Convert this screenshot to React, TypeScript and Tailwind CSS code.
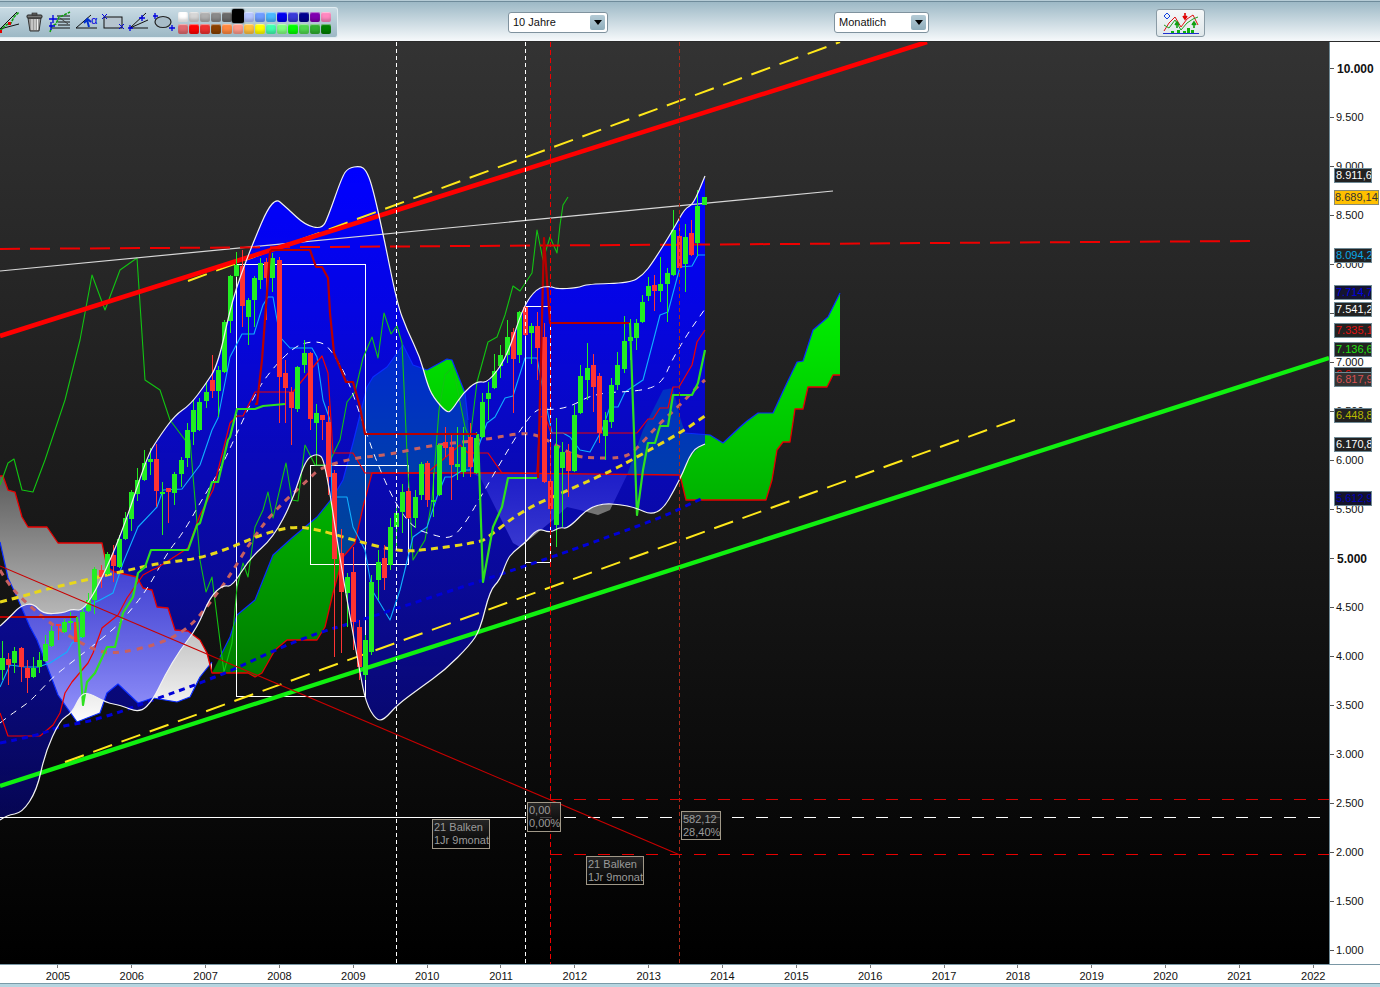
import React from "react";

type P = [number, number];
const s = (a: P[]) => a.map((p) => p.join(",")).join(" ");
const curve = (a: P[], move = true) => {
  let d = (move ? "M" : "L") + a[0].join(" ");
  for (let i = 1; i < a.length - 1; i++) {
    const mx = (a[i][0] + a[i + 1][0]) / 2;
    const my = (a[i][1] + a[i + 1][1]) / 2;
    d += ` Q${a[i][0]} ${a[i][1]} ${mx} ${my}`;
  }
  d += ` L${a[a.length - 1].join(" ")}`;
  return d;
};

const upper: P[] = [[0,626],[10,617],[20,606],[33,603],[43,614],[63,613],[72,609],[83,611],[100,583],[123,530],[147,457],[157,440],[175,415],[190,405],[205,385],[218,365],[232,300],[250,250],[273,196],[287,208],[305,225],[322,229],[328,217],[342,177],[348,168],[360,166],[366,170],[372,185],[383,233],[397,303],[407,330],[420,357],[427,383],[433,397],[447,413],[452,410],[463,393],[477,381],[488,383],[507,357],[523,307],[537,288],[550,286],[557,289],[577,288],[588,284],[630,283],[643,275],[653,262],[673,230],[685,208],[693,205],[705,176]];
const lower: P[] = [[0,820],[7,815],[22,813],[37,790],[45,753],[60,720],[72,713],[80,696],[87,692],[107,703],[120,705],[140,713],[153,700],[165,675],[180,650],[197,628],[210,597],[223,585],[232,587],[250,558],[273,538],[293,500],[305,460],[317,453],[325,460],[340,560],[360,673],[366,703],[376,720],[384,720],[397,705],[420,688],[445,670],[470,645],[480,630],[490,590],[500,580],[507,560],[513,552],[525,543],[538,528],[550,533],[560,527],[568,529],[593,503],[630,505],[658,518],[680,480],[692,450],[705,444]];
const envelope = curve(upper) + " " + curve([...lower].reverse(), false) + " Z";

const spanBLeft: P[] = [[0,476],[3,476],[8,490],[15,492],[22,517],[28,527],[47,527],[58,543],[102,543],[107,567],[115,572],[137,577],[143,588],[152,590],[157,607],[168,608],[175,630],[188,631],[200,640],[207,653],[212,673]];
const spanALeft: P[] = [[0,542],[8,578],[17,597],[30,627],[37,640],[58,695],[77,722],[100,713],[107,693],[118,684],[138,703],[153,698],[177,702],[190,697],[200,677],[212,662]];
const cloudB: P[] = [[212,673],[220,657],[230,637],[237,615],[255,600],[273,555],[293,537],[317,517],[333,497],[343,480],[353,443],[367,387],[373,377],[387,367],[403,345],[413,365],[427,370],[447,359],[452,360],[465,393],[468,420],[471,473],[372,473],[363,507],[355,543],[343,557],[333,593],[325,627],[317,640],[287,640],[275,650],[262,673],[255,677],[248,673]];
const cloudC: P[] = [[471,473],[480,477],[513,543],[520,547],[553,520],[567,507],[580,510],[598,515],[610,510],[627,475],[502,473]];
const cloudD: P[] = [[627,475],[643,430],[663,390],[673,388],[680,417],[685,433],[710,435],[723,443],[740,427],[747,421],[758,413],[773,413],[785,387],[797,362],[803,361],[813,330],[828,317],[840,293],[840,375],[833,375],[827,387],[808,387],[803,409],[795,409],[790,442],[783,442],[777,450],[772,480],[766,500],[686,500],[680,475]];
const spanB: P[] = [...spanBLeft,[248,673],[255,677],[262,673],[275,650],[287,640],[317,640],[325,627],[333,593],[343,557],[355,543],[363,507],[372,473],[502,473],[680,475],[686,500],[766,500],[772,480],[777,450],[783,442],[790,442],[795,409],[803,409],[808,387],[827,387],[833,375],[840,375]];
const spanAUp: P[] = cloudB.slice(1,21);
const spanARight: P[] = cloudD.slice(5,18);

const cyan: P[] = [[0,687],[10,665],[25,667],[38,667],[50,663],[67,652],[72,643],[82,637],[83,608],[100,600],[113,593],[123,563],[138,527],[157,507],[163,490],[182,489],[200,465],[212,430],[218,418],[230,357],[242,334],[254,334],[263,305],[268,297],[273,297],[280,337],[290,348],[312,348],[317,357],[323,400],[330,420],[332,497],[347,497],[353,527],[365,550],[372,590],[390,620],[400,590],[413,537],[427,527],[437,497],[445,477],[452,477],[463,470],[470,470],[487,423],[495,417],[505,398],[513,396],[525,358],[537,358],[545,400],[552,433],[563,433],[570,437],[580,450],[590,452],[602,430],[610,407],[618,407],[625,392],[643,380],[653,342],[660,315],[668,312],[680,267],[692,266],[698,255],[705,255]];
const chikou: P[] = [[0,485],[8,463],[14,459],[22,490],[33,492],[45,460],[65,400],[80,340],[92,275],[105,310],[120,270],[137,258],[145,380],[160,390],[170,420],[185,440],[190,440],[197,523],[200,560],[206,592],[212,577],[222,657],[224,672],[232,643],[237,587],[243,563],[248,577],[255,527],[263,510],[268,492],[273,518],[286,463],[292,500],[298,501],[305,445],[315,465],[328,465],[340,440],[347,402],[355,392],[363,358],[372,337],[378,358],[384,313],[391,334],[397,326],[402,343],[407,453],[413,560],[425,540],[432,500],[439,410],[445,375],[453,367],[465,427],[470,440],[477,382],[488,342],[497,337],[505,315],[513,286],[520,291],[532,273],[537,230],[543,260],[550,237],[557,253],[560,225],[563,205],[568,197]];
const thickRed: P[][] = [[[0,617],[77,617]],[[255,404],[257,404],[262,360],[270,252],[272,250],[310,250],[316,267],[322,267],[328,278],[330,313],[334,353],[340,367],[346,382],[353,382],[360,407],[365,434],[477,434]],[[538,478],[544,238],[550,323],[630,323]]];
const thickGreen: P[][] = [[[77,617],[83,705],[87,682],[95,673],[107,647],[115,647],[123,613],[133,597],[138,573],[145,567],[151,550],[188,550],[197,525],[200,523],[212,482],[218,482],[228,440],[230,437],[237,409],[255,409],[263,406],[285,404]],[[478,434],[483,582],[493,527],[502,507],[508,478],[537,478]],[[630,323],[637,515],[643,470],[648,443],[655,443],[660,426],[668,426],[673,395],[692,395],[698,383],[705,350]]];
const thinRed: P[] = [[0,713],[8,736],[40,736],[53,725],[60,713],[65,693],[72,682],[88,663],[93,653],[102,628],[118,615],[127,598],[143,575],[152,570],[157,568],[188,548],[200,515],[213,490],[230,423],[237,416],[243,416],[255,392],[293,392],[322,356],[328,373],[333,453],[353,453],[365,473],[427,473],[440,462],[460,445],[468,453],[488,453],[502,473],[537,473],[540,417],[545,416],[551,433],[637,433],[648,419],[653,419],[660,408],[668,408],[673,387],[679,387],[692,365],[697,342],[705,330]];
const midBand: P[] = [[0,723],[10,715],[28,703],[38,693],[53,677],[72,662],[90,648],[115,628],[125,617],[147,590],[167,553],[183,533],[200,503],[220,470],[237,433],[257,390],[273,368],[293,348],[307,342],[323,342],[333,353],[347,377],[363,423],[377,463],[395,503],[413,528],[433,535],[450,539],[463,527],[483,493],[502,460],[522,427],[537,408],[550,410],[570,407],[595,393],[643,391],[662,383],[672,360],[688,333],[705,309]];
const salmon: P[] = [[0,570],[7,582],[20,597],[40,615],[57,628],[87,647],[113,655],[163,643],[190,627],[210,603],[227,580],[253,538],[275,510],[310,478],[320,468],[353,458],[387,455],[433,445],[483,440],[520,433],[538,435],[552,443],[577,457],[595,458],[620,458],[633,453],[658,425],[680,405],[697,387],[705,380]];
const yellow: P[] = [[0,602],[20,597],[43,590],[77,582],[120,572],[160,563],[197,559],[230,548],[260,535],[293,526],[320,530],[353,540],[400,552],[433,549],[480,542],[487,538],[523,510],[573,488],[613,470],[637,457],[680,433],[705,416]];
const blueDash: P[] = [[0,743],[40,735],[57,727],[87,722],[120,712],[147,702],[187,688],[233,670],[277,649],[320,632],[353,623],[550,558],[613,535],[660,518],[703,498]];

// x, body top, body bottom, wick top, wick bottom, colour
const candles: [number, number, number, number, number, "g" | "r"][] = [
[2,658,670,641,680,"g"],[8,659,665,653,685,"r"],[14,651,663,647,673,"g"],[21,648,667,647,682,"r"],[27,668,678,660,693,"r"],[33,668,677,657,678,"g"],[39,660,667,652,673,"g"],[45,644,661,635,662,"g"],[51,631,646,626,647,"g"],[58,624,625,624,640,"r"],[64,622,632,619,633,"g"],[70,621,623,612,630,"g"],[76,622,642,617,642,"r"],[82,612,637,608,638,"g"],[88,600,611,593,612,"g"],[94,569,600,567,614,"g"],[101,570,577,565,588,"r"],[107,554,574,552,575,"g"],[113,555,566,545,582,"r"],[119,539,567,535,568,"g"],[125,518,539,512,540,"g"],[131,492,519,490,531,"g"],[137,480,494,468,501,"g"],[144,463,480,450,481,"g"],[150,459,462,448,475,"g"],[156,459,491,444,507,"r"],[162,492,493,482,535,"g"],[168,488,492,488,523,"r"],[174,474,493,472,505,"g"],[181,460,474,457,487,"g"],[187,430,458,423,467,"g"],[193,410,432,400,445,"g"],[199,402,430,398,431,"g"],
[206,392,401,383,408,"g"],[212,380,391,355,398,"r"],[218,370,391,366,417,"g"],[224,322,372,320,373,"g"],[230,276,321,275,333,"g"],[236,265,276,252,277,"g"],[242,266,306,250,327,"r"],[248,300,317,298,345,"g"],[254,278,300,276,327,"g"],[260,263,280,258,289,"g"],[266,262,278,258,320,"r"],[272,258,278,253,292,"g"],[279,260,377,257,423,"r"],[285,373,388,360,423,"r"],[291,392,408,387,445,"r"],[297,367,409,366,412,"g"],[304,353,365,340,373,"g"],[310,353,419,352,430,"r"],[316,413,423,404,465,"g"],[322,415,420,415,440,"r"],[328,422,477,406,495,"r"],[334,473,559,470,657,"r"],[341,553,592,529,653,"r"],[347,577,593,573,627,"g"],[353,572,622,547,650,"r"],[359,627,667,620,680,"r"],[365,640,675,635,680,"g"],[371,582,652,575,655,"g"],[378,562,580,550,600,"g"],[384,558,578,545,590,"r"],[390,527,565,518,570,"g"],[396,513,527,507,550,"g"],[402,492,512,484,533,"g"],[408,491,518,488,519,"r"],[415,497,518,490,528,"g"],[421,464,495,462,500,"g"],[427,463,500,461,507,"r"],[433,500,502,473,517,"g"],[439,445,495,444,496,"g"],[445,442,448,427,457,"r"],[451,447,465,433,500,"r"],[457,464,467,427,480,"g"],[463,447,472,427,477,"g"],[470,437,467,423,477,"r"],[476,438,473,432,474,"g"],
[482,402,437,393,438,"g"],[488,393,399,382,420,"g"],[494,371,388,354,389,"g"],[500,355,366,345,378,"g"],[507,337,355,320,363,"g"],[513,332,359,328,413,"r"],[519,312,355,311,363,"g"],[525,307,335,306,336,"r"],[531,326,333,323,364,"g"],[537,326,348,312,380,"r"],[544,337,482,323,483,"r"],[550,481,509,447,525,"r"],[556,446,525,418,547,"g"],[562,452,468,442,527,"g"],[568,452,471,444,497,"r"],[574,415,471,405,472,"g"],[580,376,413,365,414,"g"],[587,368,380,343,400,"g"],[593,365,387,354,412,"r"],[599,376,433,373,443,"r"],[605,420,436,412,460,"g"],[611,385,422,378,428,"g"],[617,365,385,352,390,"g"],[624,341,369,316,373,"g"],[630,337,341,319,360,"g"],[636,323,338,319,350,"g"],[642,302,322,295,323,"g"],[648,286,296,277,301,"g"],[654,285,291,275,311,"r"],[660,284,291,257,302,"g"],[667,273,284,268,322,"g"],[673,230,275,210,276,"g"],[679,236,268,224,270,"r"],[685,237,264,224,292,"g"],[691,233,255,220,256,"r"],[697,206,243,190,256,"g"],[704,197,205,197,205,"g"],
];

const Poly = ({ p, c, w = 1, d }: { p: P[]; c: string; w?: number; d?: string }) => (
  <polyline points={s(p)} fill="none" stroke={c} strokeWidth={w} strokeDasharray={d} strokeLinejoin="round" />
);
const Curve = ({ p, c, w = 1, d }: { p: P[]; c: string; w?: number; d?: string }) => (
  <path d={curve(p)} fill="none" stroke={c} strokeWidth={w} strokeDasharray={d} strokeLinejoin="round" />
);

function Chart() {
  return (
    <svg className="block" width="1329" height="922" viewBox="0 42 1329 922">
      <defs>
        <linearGradient id="bg" gradientUnits="userSpaceOnUse" x1="0" y1="42" x2="0" y2="964">
          <stop offset="0" stopColor="#333333" />
          <stop offset="1" stopColor="#000000" />
        </linearGradient>
        <linearGradient id="env" gradientUnits="userSpaceOnUse" x1="0" y1="170" x2="0" y2="820">
          <stop offset="0" stopColor="#0000ff" stopOpacity="1" />
          <stop offset="0.2" stopColor="#0000ff" stopOpacity="0.88" />
          <stop offset="0.43" stopColor="#0000ff" stopOpacity="0.7" />
          <stop offset="0.6" stopColor="#0000ff" stopOpacity="0.58" />
          <stop offset="0.82" stopColor="#0000ff" stopOpacity="0.43" />
          <stop offset="1" stopColor="#0000ff" stopOpacity="0.3" />
        </linearGradient>
        <linearGradient id="grn" gradientUnits="userSpaceOnUse" x1="0" y1="300" x2="0" y2="680">
          <stop offset="0" stopColor="#00f000" />
          <stop offset="1" stopColor="#007a00" />
        </linearGradient>
        <linearGradient id="gry" gradientUnits="userSpaceOnUse" x1="0" y1="480" x2="0" y2="725">
          <stop offset="0" stopColor="#5f5f5f" />
          <stop offset="1" stopColor="#ffffff" />
        </linearGradient>
      </defs>
      <rect x="0" y="42" width="1329" height="922" fill="url(#bg)" />

      <polygon points={s([...spanBLeft, ...[...spanALeft].reverse()])} fill="url(#gry)" />
      <polygon points={s(cloudB)} fill="url(#grn)" />
      <polygon points={s(cloudC)} fill="url(#gry)" />
      <polygon points={s(cloudD)} fill="url(#grn)" />
      <path d={envelope} fill="url(#env)" />

      <Poly p={spanALeft} c="#0a2cff" w={1.2} />
      <Poly p={spanAUp} c="#0a2cff" w={1.2} />
      <Poly p={spanARight} c="#0a2cff" w={1.2} />
      <Poly p={spanB} c="#e60000" w={1.3} />

      <rect x="236.5" y="264.5" width="129" height="432" fill="none" stroke="#fff" />
      <rect x="310.5" y="465.5" width="98" height="99" fill="none" stroke="#fff" />
      <rect x="525.5" y="306.5" width="25" height="256" fill="none" stroke="#fff" />

      <Poly p={chikou} c="#12c412" w={1.1} />
      <Poly p={cyan} c="#10b0ff" w={1.1} />
      <Curve p={midBand} c="#ffffff" w={1} d="7 6" />
      <Poly p={thinRed} c="#f00000" w={1.2} />

      <Curve p={salmon} c="#c86060" w={3} d="6 6" />
      <Curve p={yellow} c="#e8d81a" w={3} d="7 5" />
      <Curve p={blueDash} c="#0000d8" w={3} d="6 5" />

      <line x1="0" y1="786" x2="1329" y2="358" stroke="#10f010" strokeWidth="4.4" />
      <line x1="65" y1="762" x2="1015" y2="420" stroke="#ffe81a" strokeWidth="2" strokeDasharray="20 10" />
      <line x1="188" y1="281" x2="840" y2="42" stroke="#ffe81a" strokeWidth="2" strokeDasharray="20 10" />
      <line x1="0" y1="271" x2="833" y2="191" stroke="#d8d8d8" strokeWidth="1.2" />
      <line x1="0" y1="249" x2="1252" y2="241" stroke="#f00000" strokeWidth="2" strokeDasharray="20 10" />
      <line x1="0" y1="336" x2="927" y2="42" stroke="#ff0000" strokeWidth="4.6" />

      {candles.map(([x, t, b, wt, wb, c], i) => {
        const col = c === "g" ? "#22ee22" : "#ff3333";
        return (
          <g key={i}>
            <rect x={x} y={wt} width="1" height={wb - wt} fill={col} />
            <rect x={x - 2} y={t} width="5" height={Math.max(b - t, 2)} fill={col} />
          </g>
        );
      })}

      {thickRed.map((p, i) => <Poly key={i} p={p} c="#b80000" w={2.2} />)}
      {thickGreen.map((p, i) => <Poly key={i} p={p} c="#2ee020" w={2.2} />)}

      <Curve p={upper} c="#f2f2f2" w={1.2} />
      <Curve p={lower} c="#f2f2f2" w={1.2} />

      <line x1="396.5" y1="42" x2="396.5" y2="964" stroke="#fff" strokeDasharray="4 3" />
      <line x1="525.5" y1="42" x2="525.5" y2="964" stroke="#fff" strokeDasharray="4 3" />
      <line x1="550.5" y1="42" x2="550.5" y2="964" stroke="#f00000" strokeDasharray="5 3" />
      <line x1="679.5" y1="42" x2="679.5" y2="964" stroke="#a82818" strokeDasharray="4 3" />

      <line x1="0" y1="817.5" x2="526" y2="817.5" stroke="#fff" />
      <line x1="540" y1="817.5" x2="1320" y2="817.5" stroke="#fff" strokeDasharray="12 12" />
      <line x1="550" y1="799.5" x2="1329" y2="799.5" stroke="#d80000" strokeDasharray="12 12" />
      <line x1="550" y1="854.5" x2="1329" y2="854.5" stroke="#e80000" strokeDasharray="12 12" />
      <line x1="0" y1="566" x2="680" y2="855" stroke="#c80000" strokeWidth="1.1" />
    </svg>
  );
}

const topSw = ["#ffffff","#d6d6d6","#b0b0b0","#8a8a8a","#6a6a6a","#000000","#b6c6ff","#6f9cff","#4ab8ff","#0000f0","#3a3ad8","#00008f","#8000b0","#ff88c0"];
const botSw = ["#e06a70","#ff0000","#ee3030","#8a4000","#ff8840","#ff9a8a","#ffc040","#ffff00","#40ffb0","#80ff80","#00ff00","#50d850","#30b030","#008000"];

const Sw = ({ c, big }: { c: string; big?: boolean }) => (
  <div
    className={big
      ? "w-[12px] h-[14px] -mt-[3px] -mx-[1px] rounded-[2px] shadow-[0_0_2px_#000]"
      : "w-[10px] h-[10px] rounded-[2px] shadow-[inset_0_-3px_3px_rgba(0,0,0,0.18),inset_0_1px_1px_rgba(255,255,255,0.5)]"}
    style={{ backgroundColor: c }}
  />
);

function ToolIcons() {
  return (
    <div className="flex items-center h-full">
      <svg width="26" height="31" viewBox="0 7 26 31" className="shrink-0">
        <path d="M0 29L17 12M0 29L19 24" stroke="#111" fill="none" />
        <path d="M0 31L6 25L11 23L14 17L19 12" stroke="#10a010" strokeWidth="1.6" fill="none" strokeDasharray="3 1" />
        <rect x="8" y="22" width="3" height="3" fill="#e00000" />
        <rect x="0" y="30" width="2" height="3" fill="#e00000" />
      </svg>
      <svg width="23" height="31" viewBox="26 7 23 31" className="shrink-0">
        <path d="M28 18L30 31H39L41 18Z" fill="#9a9a9a" stroke="#333" />
        <path d="M32 19V30M35 19V30M37.5 19V30" stroke="#eee" />
        <rect x="27" y="15" width="15" height="3" rx="1" fill="#777" stroke="#222" />
        <rect x="32" y="13" width="5" height="2" fill="#666" stroke="#222" strokeWidth="0.6" />
      </svg>
      <svg width="26" height="31" viewBox="49 7 26 31" className="shrink-0">
        <path d="M57 16H70M57 19H70M58 22H70M58 25H70M52 28H70" stroke="#111" />
        <path d="M60 18L68 24" stroke="#444" />
        <path d="M50 32L52 26L56 24L59 17L62 16L66 14L70 12" stroke="#10a010" strokeWidth="1.5" fill="none" strokeDasharray="3 1" />
        <path d="M53 15V23M49 19H57M51 22V30M47 26H55" stroke="#0000e0" strokeWidth="1.3" />
      </svg>
      <svg width="26" height="31" viewBox="75 7 26 31" className="shrink-0">
        <path d="M91 15L76 28H97" stroke="#111" fill="none" />
        <path d="M89 27L87 20M84 23L87.5 19L91 22" stroke="#0030d0" strokeWidth="2" fill="none" />
        <text x="91" y="24" fontSize="11" fill="#0000e0" fontFamily="Liberation Sans, sans-serif">α</text>
      </svg>
      <svg width="27" height="31" viewBox="101 7 27 31" className="shrink-0">
        <rect x="104" y="17" width="18" height="11" fill="#b6c4ce" stroke="#111" />
        <path d="M101 14L106 19M106 14L101 19M118 24L123 29M123 24L118 29" stroke="#0000e0" transform="translate(1 0)" />
      </svg>
      <svg width="25" height="31" viewBox="128 7 25 31" className="shrink-0">
        <path d="M130 28L146 13M130 28L148 20M130 28H148" stroke="#111" fill="none" />
        <path d="M142 15V21M139 18H145M130 25V31M127 28H133" stroke="#0000e0" strokeWidth="1.3" />
      </svg>
      <svg width="26" height="31" viewBox="153 7 26 31" className="shrink-0">
        <ellipse cx="163" cy="22" rx="8" ry="5.5" fill="#a8bcc8" stroke="#222" strokeWidth="1.2" />
        <path d="M155 13V19M152 16H158M172 25V31M169 28H175" stroke="#0000e0" strokeWidth="1.3" />
      </svg>
    </div>
  );
}

function Drop({ label, w }: { label: string; w: string }) {
  return (
    <div className={`${w} h-[21px] shrink-0 bg-white border border-[#7f929e] rounded-[3px] flex items-center justify-between pl-[4px] pr-[2px] text-[11px] text-[#111] leading-none`}>
      <span>{label}</span>
      <span className="w-[15px] h-[15px] rounded-[2px] bg-gradient-to-b from-[#b4cbd6] to-[#8fadbb] flex items-center justify-center">
        <span className="w-0 h-0 border-l-[4px] border-r-[4px] border-t-[5px] border-l-transparent border-r-transparent border-t-black" />
      </span>
    </div>
  );
}

function Toolbar() {
  return (
    <div className="shrink-0 h-[42px] flex flex-col border-b border-[#2a2a2a]">
      <div className="h-px bg-[#b6ccd6]" />
      <div className="h-px bg-[#6f8c9b]" />
      <div className="flex-1 flex items-center pt-[2px] bg-gradient-to-b from-[#9db9c6] to-[#f6f9fb]">
        <div className="w-[338px] h-[31px] shrink-0 flex items-center rounded-r-[3px] border border-l-0 border-[#e2edf2] bg-gradient-to-b from-[#c8dbe4] to-[#9db8c5] overflow-visible">
          <ToolIcons />
          <div className="flex flex-col gap-px -ml-[1px]">
            <div className="flex gap-px items-start">{topSw.map((c, i) => <Sw key={i} c={c} big={i === 5} />)}</div>
            <div className="flex gap-px">{botSw.map((c, i) => <Sw key={i} c={c} />)}</div>
          </div>
        </div>
        <div className="w-[170px] shrink-0" />
        <Drop label="10 Jahre" w="w-[100px]" />
        <div className="w-[226px] shrink-0" />
        <Drop label="Monatlich" w="w-[95px]" />
        <div className="w-[227px] shrink-0" />
        <div className="w-[49px] h-[28px] shrink-0 rounded-[3px] border border-[#8a9ba5] bg-gradient-to-b from-[#f4f7f8] to-[#dfe7ea] flex items-center justify-center">
          <svg width="36" height="24" viewBox="0 0 36 24">
            <path d="M1 20L6 12L12 6L18 16L24 8L30 4L35 14" stroke="#e01010" fill="none" />
            <path d="M1 14L6 17L12 9L18 19L24 12L30 8L35 6" stroke="#20a020" fill="none" />
            <path d="M3 2L6 5L3 8L0 5Z" stroke="#1040e0" fill="none" transform="translate(1 0)" />
            <path d="M22 2V7M20 5L22 8L24 5" stroke="#e00000" strokeWidth="1.6" fill="none" />
            <path d="M14 17V12M12 14L14 11L16 14M31 17V12M29 14L31 11L33 14" stroke="#10a010" strokeWidth="1.6" fill="none" />
            <path d="M8 20h3v2H8zM14 19h3v3h-3zM20 20h3v2h-3zM24 17h3v5h-3zM28 19h3v3h-3z" fill="#10b010" />
            <path d="M0 22.500H36" stroke="#2030d0" />
          </svg>
        </div>
      </div>
    </div>
  );
}

const ticks = ["10.000","9.500","9.000","8.500","8.000","7.500","7.000","6.500","6.000","5.500","5.000","4.500","4.000","3.500","3.000","2.500","2.000","1.500","1.000"];
const bold = new Set(["10.000", "5.000"]);

const badges: { t: string; y: number; c: string; bg: string }[] = [
  { t: "8.911,6", y: 168, c: "text-white", bg: "bg-[#222]" },
  { t: "8.094,2", y: 248, c: "text-[#0aa8e8]", bg: "bg-[#222]" },
  { t: "7.714,7", y: 285, c: "text-[#0000e0]", bg: "bg-[#141430]" },
  { t: "7.541,2", y: 302, c: "text-white", bg: "bg-[#222]" },
  { t: "7.335,1", y: 323, c: "text-[#e01010]", bg: "bg-[#222]" },
  { t: "7.136,6", y: 342, c: "text-[#22e010]", bg: "bg-[#222]" },
  { t: "6.9", y: 367, c: "text-[#e01010]", bg: "bg-[#222]" },
  { t: "6.817,9", y: 372, c: "text-[#d85050]", bg: "bg-[#333]" },
  { t: "6.448,8", y: 408, c: "text-[#b8b800]", bg: "bg-[#222]" },
  { t: "6.170,8", y: 437, c: "text-white", bg: "bg-[#222]" },
  { t: "5.612,9", y: 491, c: "text-[#0000b8]", bg: "bg-[#14142a]" },
];

function PriceAxis() {
  return (
    <div className="relative w-[51px] bg-white border-l border-[#6f8a96] text-[11px] leading-none text-[#111] pt-[2px]">
      {ticks.map((t) => (
        <div key={t} className="h-[49px] flex items-center">
          <span className="w-[4px] h-px bg-[#555]" />
          <span className={bold.has(t) ? "ml-[3px] text-[12px] font-bold" : "ml-[2px]"}>{t}</span>
        </div>
      ))}
      {badges.map((b) => (
        <div key={b.t} style={{ top: b.y - 42 }} className={`absolute left-[4px] w-[38px] h-[15px] overflow-hidden border border-[#6f8a96] flex items-center pl-[1px] ${b.bg} ${b.c}`}>
          {b.t}
        </div>
      ))}
      <div style={{ top: 190 - 42 }} className="absolute left-[4px] w-[45px] h-[15px] overflow-hidden border border-[#8a8a70] bg-[#ffc000] text-[#333] flex items-center">
        8.689,14
      </div>
    </div>
  );
}

const Label = ({ a, b, cls }: { a: string; b: string; cls: string }) => (
  <div className={`absolute border border-[#a09888] bg-gradient-to-b from-[#2c2c2c]/80 to-[#050505]/80 text-[#9a9a9a] text-[11px] leading-[13px] pl-[1px] py-[1px] overflow-hidden whitespace-nowrap ${cls}`}>
    <div>{a}</div>
    <div>{b}</div>
  </div>
);

const years = ["2005","2006","2007","2008","2009","2010","2011","2012","2013","2014","2015","2016","2017","2018","2019","2020","2021","2022"];

export default function App() {
  return (
    <div className="w-[1380px] h-[987px] flex flex-col overflow-hidden bg-white font-['Liberation_Sans',Arial,sans-serif]">
      <Toolbar />
      <div className="flex h-[922px] shrink-0">
        <div className="relative w-[1329px] shrink-0">
          <Chart />
          <Label a="21 Balken" b="1Jr 9monatl" cls="left-[432px] top-[777px] w-[58px] h-[30px]" />
          <Label a="21 Balken" b="1Jr 9monatl" cls="left-[586px] top-[814px] w-[58px] h-[29px]" />
          <Label a="0,00" b="0,00%" cls="left-[527px] top-[760px] w-[34px] h-[30px]" />
          <Label a="582,12" b="28,40%" cls="left-[681px] top-[769px] w-[40px] h-[29px]" />
        </div>
        <PriceAxis />
      </div>
      <div className="h-[19px] shrink-0 flex pl-[21px] border-t border-[#7a97a5] bg-white text-[11px] text-[#111] leading-none">
        {years.map((y) => (
          <div key={y} className="w-[73.85px] shrink-0 flex flex-col items-center">
            <span className="w-px h-[3px] bg-[#777]" />
            <span className="mt-[3px]">{y}</span>
          </div>
        ))}
      </div>
      <div className="h-[4px] shrink-0 border-t border-[#7a9aa8] bg-[#b6d5e0]" />
    </div>
  );
}
